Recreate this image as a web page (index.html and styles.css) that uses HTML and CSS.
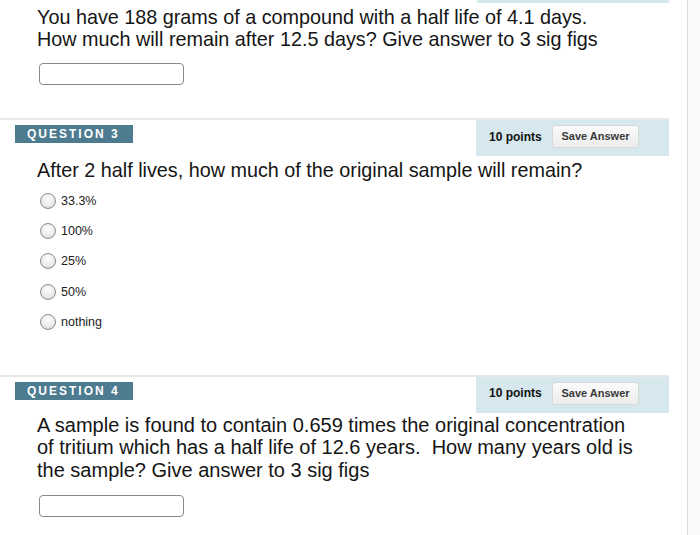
FILE: index.html
```html
<!DOCTYPE html>
<html>
<head>
<meta charset="utf-8">
<link rel="stylesheet" href="styles.css">
</head>
<body>
<div class="page">
  <div class="main">
    <div class="prev-tail"></div>
    <div class="q-text first">You have 188 grams of a compound with a half life of 4.1 days.<br>How much will remain after 12.5 days? Give answer to 3 sig figs</div>
    <div class="answer"><span class="input"></span></div>

    <div class="question q3">
      <div class="q-head">
        <span class="label">QUESTION 3</span>
        <div class="points"><span class="pts">10 points</span><span class="save">Save Answer</span></div>
      </div>
      <div class="q-text">After 2 half lives, how much of the original sample will remain?</div>
      <ul class="options">
        <li><span class="radio"></span>33.3%</li>
        <li><span class="radio"></span>100%</li>
        <li><span class="radio"></span>25%</li>
        <li><span class="radio"></span>50%</li>
        <li><span class="radio"></span>nothing</li>
      </ul>
    </div>

    <div class="question q4">
      <div class="q-head">
        <span class="label">QUESTION 4</span>
        <div class="points"><span class="pts">10 points</span><span class="save">Save Answer</span></div>
      </div>
      <div class="q-text tall">A sample is found to contain 0.659 times the original concentration<br>of tritium which has a half life of 12.6 years.&nbsp; How many years old is<br>the sample? Give answer to 3 sig figs</div>
      <div class="answer"><span class="input"></span></div>
    </div>
  </div>
  <div class="side"></div>
</div>
</body>
</html>
```

FILE: styles.css
```css
html, body {
  margin: 0;
  padding: 0;
  background: #ffffff;
}
body {
  font-family: "Liberation Sans", Arial, sans-serif;
  color: #111;
}
.page {
  display: flex;
  width: 700px;
  height: 535px;
  overflow: hidden;
}
.main {
  width: 688px;
  border-right: 1px solid #dcdcdc;
  box-sizing: border-box;
  padding-right: 18px;
}
.side {
  flex: 1;
  background: #fafafa;
}
.prev-tail {
  margin-left: 477px;
  height: 3px;
  background: #d6e8ee;
}
.q-text {
  font-size: 19.8px;
  line-height: 22px;
  padding-left: 37px;
  margin-top: 3px;
  color: #151515;
  white-space: nowrap;
}
.q-text.first {
  margin-top: 3px;
}
.q-text.tall {
  line-height: 22.5px;
  margin-top: 1px;
  font-size: 20px;
}
.answer {
  padding-left: 39px;
  margin-top: 13px;
}
.input {
  display: block;
  width: 143px;
  height: 20px;
  border: 1px solid #8a8a8a;
  border-radius: 4px;
  background: #fff;
}
.question {
  border-top: 2px solid #e8e8e8;
}
.q3 {
  margin-top: 33px;
}
.q4 {
  margin-top: 38px;
}
.q4 .answer {
  margin-top: 14px;
}
.q-head {
  display: flex;
  justify-content: space-between;
  align-items: flex-start;
}
.label {
  margin-left: 15px;
  margin-top: 5px;
  width: 118px;
  height: 18px;
  box-sizing: border-box;
  padding-left: 12px;
  background: #4d7b90;
  color: #fff;
  font-weight: bold;
  font-size: 12px;
  letter-spacing: 2px;
  line-height: 18px;
}
.points {
  width: 193px;
  height: 36px;
  background: #d6e8ee;
  display: flex;
  align-items: center;
  box-sizing: border-box;
  padding-left: 13px;
  padding-bottom: 3px;
}
.pts {
  font-weight: bold;
  font-size: 12px;
  color: #111;
  width: 63px;
}
.save {
  display: inline-block;
  width: 87px;
  height: 23px;
  box-sizing: border-box;
  border: 1px solid #d8d8d8;
  border-radius: 3px;
  background: linear-gradient(#fbfbfb, #ececec);
  font-weight: bold;
  font-size: 11px;
  color: #3a3a3a;
  text-align: center;
  line-height: 21px;
}
.options {
  list-style: none;
  margin: 5px 0 0 0;
  padding: 0 0 0 40px;
}
.options li {
  height: 30.2px;
  display: flex;
  align-items: center;
  font-size: 12.5px;
  color: #222;
}
.radio {
  width: 14px;
  height: 14px;
  border: 1px solid #8c8c8c;
  border-radius: 50%;
  background: radial-gradient(circle at 50% 35%, #fdfdfd 0%, #ececec 55%, #cfcfcf 100%);
  margin-right: 5px;
}
```
